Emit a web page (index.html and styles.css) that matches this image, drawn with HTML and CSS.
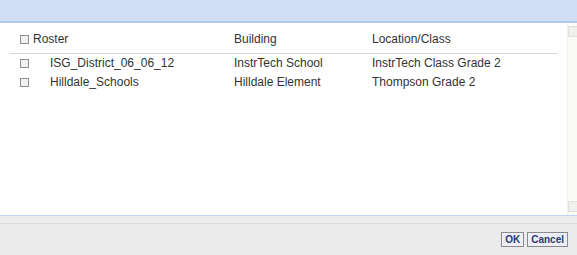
FILE: index.html
```html
<!DOCTYPE html>
<html lang="en">
<head>
	<meta charset="UTF-8">
	<title>Select Roster</title>
	<link rel="stylesheet" href="styles.css">
</head>
<body>
	<div class="titlebar"></div>
	<div class="main">
		<div class="list">
			<div class="row head">
				<div class="c-name"><span class="chk"></span>Roster</div>
				<div class="c-building">Building</div>
				<div class="c-loc">Location/Class</div>
			</div>
			<div class="row">
				<div class="c-name"><span class="chk"></span><span class="name">ISG_District_06_06_12</span></div>
				<div class="c-building">InstrTech School</div>
				<div class="c-loc">InstrTech Class Grade 2</div>
			</div>
			<div class="row">
				<div class="c-name"><span class="chk"></span><span class="name">Hilldale_Schools</span></div>
				<div class="c-building">Hilldale Element</div>
				<div class="c-loc">Thompson Grade 2</div>
			</div>
		</div>
		<div class="scroll">
			<div class="arrow up"></div>
			<div class="arrow down"></div>
		</div>
	</div>
	<div class="footer">
		<div class="footer-line"></div>
		<div class="buttons">
			<button class="btn">OK</button>
			<button class="btn">Cancel</button>
		</div>
	</div>
</body>
</html>
```

FILE: styles.css
```css
body{
	margin: 0;
	font-family: "Liberation Sans", Arial, sans-serif;
	font-size: 12px;
	color: #333;
	background: #fff;
	overflow: hidden;
}
.titlebar{
	height: 21px;
	background: #d1ddf5;
	border-bottom: 2px solid #b3c8ee;
}
.main{
	display: flex;
	height: 192px;
	border-bottom: 1px solid #c3d3f3;
}
.list{
	flex: 1;
	margin: 0 10px;
}
.row{
	display: flex;
	height: 19px;
	line-height: 19px;
	padding-left: 10px;
}
.row.head{
	height: 16px;
	line-height: 16px;
	padding-top: 8px;
	padding-bottom: 6px;
	border-bottom: 1px solid #d3d3d3;
}
.c-name{
	width: 214px;
	display: flex;
	align-items: center;
}
.c-building{
	width: 138px;
}
.chk{
	display: inline-block;
	width: 7px;
	height: 7px;
	border: 1px solid #8a8f98;
	background: #f2f2f2;
	margin-right: 4px;
}
.row .name{
	margin-left: 17px;
}
.scroll{
	width: 9px;
	background: #fbfbf6;
	border-left: 1px solid #f0f0ea;
	display: flex;
	flex-direction: column;
	justify-content: space-between;
	padding: 3px 0;
}
.arrow{
	height: 9px;
	background: #f0f0ec;
	border: 1px solid #e2e2dc;
	border-right: none;
}
.footer{
	height: 39px;
	background: #ebebeb;
	padding-top: 7px;
}
.footer-line{
	height: 1px;
	background: #dadada;
}
.buttons{
	display: flex;
	justify-content: flex-end;
	gap: 3px;
	padding: 8px 9px 0 0;
}
.btn{
	height: 15px;
	padding: 0 3px;
	margin: 0;
	border: 1px solid #8a8a8a;
	background: #eeeefa;
	font-family: "Liberation Sans", Arial, sans-serif;
	font-size: 10px;
	font-weight: bold;
	color: #2b3a6b;
	line-height: 13px;
}
```
